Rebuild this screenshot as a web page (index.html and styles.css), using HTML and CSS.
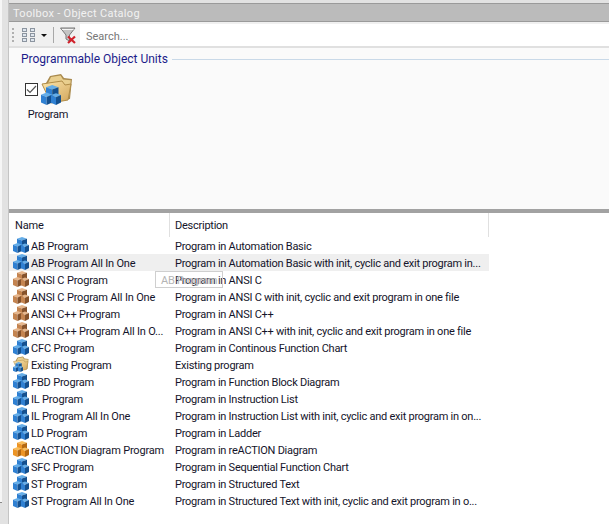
FILE: index.html
```html
<!DOCTYPE html>
<html lang="en">
<head>
  <meta charset="UTF-8" />
  <title>Toolbox - Object Catalog</title>
  <link rel="stylesheet" href="styles.css">
</head>
<body>
  <svg class="defs" width="0" height="0">
    <defs>
      <linearGradient id="folderFront" x1="0" y1="0" x2="1" y2="1">
        <stop offset="0" stop-color="#fbe6ad"/>
        <stop offset="1" stop-color="#d2a55a"/>
      </linearGradient>
    </defs>
    <symbol id="cubes" viewBox="0 0 16 16">
      <path class="c-top" d="M9 0 L14 1.8 L9 3.6 L4 1.8 Z"/>
      <path class="c-light" d="M4 1.8 L9 3.6 V9.5 L4 8 Z"/>
      <path class="c-dark" d="M9 3.6 L14 1.8 V7.5 L9 9.5 Z"/>
      <path class="c-top" d="M4.5 6 L9 7.8 L4.5 9.6 L0 7.8 Z"/>
      <path class="c-light" d="M0 7.8 L4.5 9.6 V16 L0 14 Z"/>
      <path class="c-dark" d="M4.5 9.6 L9 7.8 V14 L4.5 16 Z"/>
      <path class="c-top" d="M12 6.5 L16 8 L12 9.8 L8 8 Z"/>
      <path class="c-light" d="M8 8 L12 9.8 V16 L8 14.2 Z"/>
      <path class="c-dark" d="M12 9.8 L16 8 V14 L12 16 Z"/>
    </symbol>
    <symbol id="folder" viewBox="0 0 32 32">
      <path d="M5 10 L9 3 L20 1 L23 5 L31 6 L29 26 L12 29 Z" fill="#a98a4e"/>
      <path d="M7 10 L10 4 L19.5 2.5 L22 6.5 L29.8 7.2 L28 24 L12 27 Z" fill="#e9cf8f"/>
      <path d="M1 11 L21 8 L24 12 L30 11 L27 27 L10 30 Z" fill="url(#folderFront)" stroke="#b08c48" stroke-width="1"/>
    </symbol>
  </svg>

  <div class="gutter"><div class="gutter-edge"></div></div>

  <div class="main">
    <div class="title-bar">Toolbox - Object Catalog</div>

    <div class="toolbar">
      <div class="tools">
        <span class="grip"></span>
        <svg class="tool-icon" width="14" height="15" viewBox="0 0 14 15">
          <g fill="#dfe6ee" stroke="#8c95a0">
            <rect x="0.5" y="0.5" width="4" height="3"/><rect x="0.5" y="5.5" width="4" height="3"/><rect x="0.5" y="10.5" width="4" height="3"/>
            <rect x="8.5" y="0.5" width="4" height="3"/><rect x="8.5" y="5.5" width="4" height="3"/><rect x="8.5" y="10.5" width="4" height="3"/>
          </g>
        </svg>
        <span class="caret"></span>
        <span class="sep"></span>
        <svg class="tool-icon" width="16" height="17" viewBox="0 0 16 17">
          <path d="M0.5 1 H15 L9.5 8 V14 L6 12 V8 Z" fill="#c4c4c4" stroke="#777"/>
          <path d="M2 2.5 H13.5" stroke="#f4f4f4"/>
          <path d="M8 9.5 L15 16 M15 9.5 L8 16" stroke="#d0202a" stroke-width="2.2"/>
        </svg>
      </div>
      <div class="search">Search...</div>
    </div>

    <div class="catalog">
      <div class="group-head">
        <span class="group-name">Programmable Object Units</span>
        <span class="group-line"></span>
      </div>
      <div class="tile">
        <div class="tile-top">
          <span class="check">
            <svg width="11" height="9" viewBox="0 0 11 9"><path d="M1 4.5 L4 7.5 L10 1" fill="none" stroke="#555" stroke-width="1.2"/></svg>
          </span>
          <span class="tile-icon">
            <svg class="big-folder" width="32" height="32"><use href="#folder"/></svg>
            <svg class="big-cubes blue" width="20" height="20"><use href="#cubes"/></svg>
          </span>
        </div>
        <div class="tile-label">Program</div>
      </div>
    </div>

    <div class="splitter"></div>

    <div class="list">
      <div class="list-head">
        <div class="col-name">Name</div>
        <div class="col-desc">Description</div>
      </div>
      <div class="row"><div class="col-name"><svg class="ico blue"><use href="#cubes"/></svg>AB Program</div><div class="col-desc">Program in Automation Basic</div></div>
      <div class="row hover"><div class="col-name"><svg class="ico blue"><use href="#cubes"/></svg>AB Program All In One</div><div class="col-desc">Program in Automation Basic with init, cyclic and exit program in...</div></div>
      <div class="row"><div class="col-name"><svg class="ico brown"><use href="#cubes"/></svg>ANSI C Program</div><div class="col-desc">Program in ANSI C</div></div>
      <div class="row"><div class="col-name"><svg class="ico brown"><use href="#cubes"/></svg>ANSI C Program All In One</div><div class="col-desc">Program in ANSI C with init, cyclic and exit program in one file</div></div>
      <div class="row"><div class="col-name"><svg class="ico brown"><use href="#cubes"/></svg>ANSI C++ Program</div><div class="col-desc">Program in ANSI C++</div></div>
      <div class="row"><div class="col-name"><svg class="ico brown"><use href="#cubes"/></svg>ANSI C++ Program All In O...</div><div class="col-desc">Program in ANSI C++ with init, cyclic and exit program in one file</div></div>
      <div class="row"><div class="col-name"><svg class="ico blue"><use href="#cubes"/></svg>CFC Program</div><div class="col-desc">Program in Continous Function Chart</div></div>
      <div class="row"><div class="col-name"><span class="ico-stack"><svg class="ico"><use href="#folder"/></svg><svg class="ico-small blue"><use href="#cubes"/></svg></span>Existing Program</div><div class="col-desc">Existing program</div></div>
      <div class="row"><div class="col-name"><svg class="ico blue"><use href="#cubes"/></svg>FBD Program</div><div class="col-desc">Program in Function Block Diagram</div></div>
      <div class="row"><div class="col-name"><svg class="ico blue"><use href="#cubes"/></svg>IL Program</div><div class="col-desc">Program in Instruction List</div></div>
      <div class="row"><div class="col-name"><svg class="ico blue"><use href="#cubes"/></svg>IL Program All In One</div><div class="col-desc">Program in Instruction List with init, cyclic and exit program in on...</div></div>
      <div class="row"><div class="col-name"><svg class="ico blue"><use href="#cubes"/></svg>LD Program</div><div class="col-desc">Program in Ladder</div></div>
      <div class="row"><div class="col-name"><svg class="ico orange"><use href="#cubes"/></svg>reACTION Diagram Program</div><div class="col-desc">Program in reACTION Diagram</div></div>
      <div class="row"><div class="col-name"><svg class="ico blue"><use href="#cubes"/></svg>SFC Program</div><div class="col-desc">Program in Sequential Function Chart</div></div>
      <div class="row"><div class="col-name"><svg class="ico blue"><use href="#cubes"/></svg>ST Program</div><div class="col-desc">Program in Structured Text</div></div>
      <div class="row"><div class="col-name"><svg class="ico blue"><use href="#cubes"/></svg>ST Program All In One</div><div class="col-desc">Program in Structured Text with init, cyclic and exit program in o...</div></div>
      <div class="drag-ghost">AB Program</div>
    </div>
  </div>
</body>
</html>
```

FILE: styles.css
```css
html, body { margin: 0; height: 100%; overflow: hidden; }
body { display: flex; background: #e2e2e2; font-family: Roboto, "Open Sans", sans-serif; font-size: 11px; letter-spacing: -0.25px; color: #14142a; }
.defs { position: absolute; }

.gutter { width: 9px; flex: none; border-right: 1px solid #c4c4c4; box-sizing: border-box; }
.gutter-edge { width: 2px; height: 503px; box-sizing: border-box; background: #f6f6f6; border-bottom: 1px solid #888; }
.main { flex: 1; display: flex; flex-direction: column; padding-top: 3px; min-width: 0; }

.title-bar { height: 19px; line-height: 20px; flex: none; box-sizing: border-box; padding-left: 4px; background: #bbbbbb; border-top: 1px solid #9a9a9a; border-bottom: 1px solid #9a9a9a; color: #f2f2f2; letter-spacing: 0.3px; }

.toolbar { display: flex; height: 26px; flex: none; box-sizing: border-box; padding-top: 2px; background: #f0f0f0; border-bottom: 2px solid #e0e0e0; }
.tools { display: flex; align-items: center; width: 71px; flex: none; box-sizing: border-box; padding-left: 3px; }
.grip { width: 2px; height: 15px; margin-right: 8px; background: repeating-linear-gradient(#b0b0b0 0 2px, transparent 2px 4px); }
.caret { width: 0; height: 0; margin-left: 5px; border: 3px solid transparent; border-top: 3px solid #111; border-bottom: 0; }
.sep { width: 1px; height: 16px; margin: 0 6px; background: #a8a8a8; }
.search { flex: 1; background: #fff; padding-left: 6px; line-height: 25px; color: #777; letter-spacing: 0; }

.catalog { flex: 1; background: #fafafa; padding: 3px 0 0 12px; }
.group-head { display: flex; align-items: center; height: 16px; }
.group-name { color: #1c1c8a; font-size: 12px; letter-spacing: 0; }
.group-line { flex: 1; height: 1px; margin-left: 4px; background: #c9d9e8; }
.tile { width: 48px; margin: 6px 0 0 4px; }
.tile-top { display: flex; align-items: center; }
.check { display: flex; align-items: center; justify-content: center; width: 13px; height: 13px; border: 1px solid #333; background: #fff; box-sizing: border-box; margin-right: 3px; }
.tile-icon { position: relative; width: 32px; height: 32px; flex: none; }
.tile-icon svg { display: block; }
.big-cubes { position: absolute; left: 0; bottom: 0; }
.tile-label { margin-top: 3px; text-align: center; width: 46px; }

.splitter { height: 4px; flex: none; background: #a2a2a2; }

.list { position: relative; height: 311px; flex: none; background: #fff; }
.list-head { display: flex; height: 24px; line-height: 26px; }
.col-name { width: 157px; flex: none; display: flex; align-items: flex-start; white-space: nowrap; overflow: hidden; letter-spacing: -0.18px; }
.col-desc { width: 309px; flex: none; white-space: nowrap; overflow: hidden; }
.list-head .col-name { width: 154px; padding-left: 6px; border-right: 1px solid #e0e0e0; }
.list-head .col-desc { width: 313px; padding-left: 5px; border-right: 1px solid #e0e0e0; }
.row { display: flex; height: 17px; line-height: 19px; width: 480px; }
.row .col-name { padding-left: 4px; }
.row .col-desc { padding-left: 5px; }
.row.hover { background: #efefef; }

.ico { width: 16px; height: 16px; flex: none; margin-right: 2px; }
.ico-stack { position: relative; width: 16px; height: 16px; flex: none; margin-right: 2px; }
.ico-stack .ico { display: block; }
.ico-small { position: absolute; left: 0; bottom: 0; width: 10px; height: 10px; }

.c-top { fill: var(--cube-top); }
.c-light { fill: var(--cube-light); }
.c-dark { fill: var(--cube-dark); }
.blue { --cube-top: #64ade8; --cube-light: #2f80d2; --cube-dark: #14508f; }
.brown { --cube-top: #e6b68c; --cube-light: #c48450; --cube-dark: #85522c; }
.orange { --cube-top: #f8bd5c; --cube-light: #ec9526; --cube-dark: #b56810; }

/* dragged item floats over the rows */
.drag-ghost { position: absolute; left: 146px; top: 58px; width: 68px; height: 17px; line-height: 17px; box-sizing: border-box; padding-left: 5px; border: 1px solid #cfcfcf; background: rgba(255,255,255,0.1); color: #b4b4b4; overflow: hidden; white-space: nowrap; }
```
